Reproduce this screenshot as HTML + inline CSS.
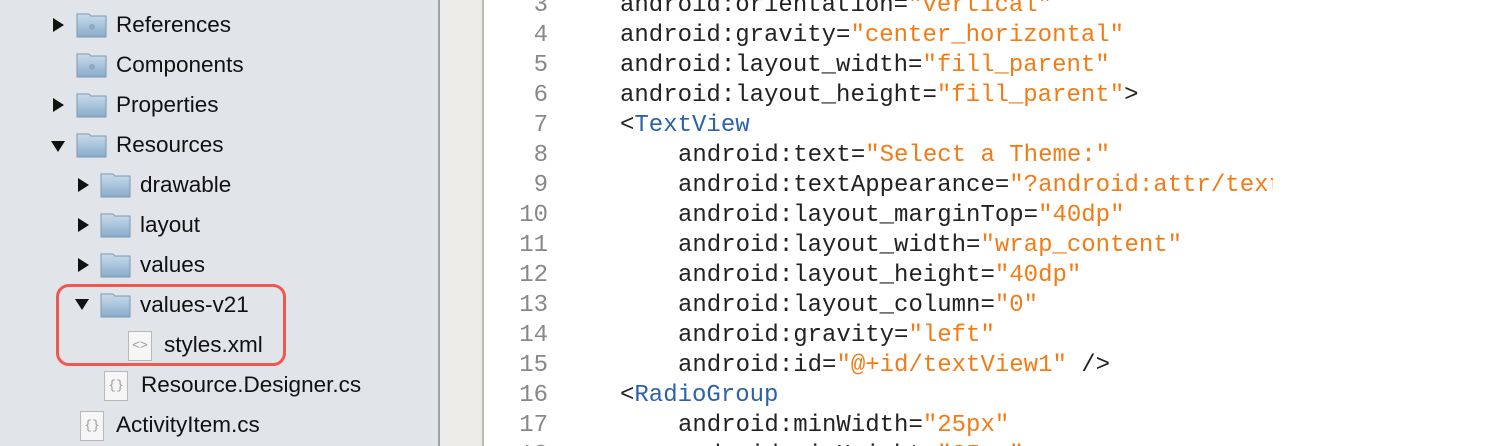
<!DOCTYPE html>
<html><head><meta charset="utf-8"><style>
html,body{margin:0;width:1500px;height:446px;overflow:hidden}
body{background:#fff;position:relative;font-family:"Liberation Sans",sans-serif}
#side{position:absolute;left:0;top:0;width:438px;height:446px;background:#e1e4e9;border-right:2px solid #9ba1a8}
#gut{position:absolute;left:440px;top:0;width:42px;height:446px;background:#ecebe8;border-right:2px solid #b9bab2}
.row{position:absolute;height:40px;line-height:40px;font-size:22.5px;color:#111;white-space:nowrap}
.tri{position:absolute;width:0;height:0}
.tr{border-left:11px solid #111;border-top:7px solid transparent;border-bottom:7px solid transparent}
.td{border-top:11px solid #111;border-left:7px solid transparent;border-right:7px solid transparent}
.fold{position:absolute;width:31px;height:26px}
.file{position:absolute;width:24px;height:30px;background:#f6f6f6;border:1px solid #b8b8b8;box-sizing:border-box;color:#999;font-size:13px;text-align:center;line-height:28px;font-family:"Liberation Mono",monospace}
.code{position:absolute;left:620px;font-family:"Liberation Mono",monospace;font-size:24px;line-height:30px;white-space:pre;color:#222}
.i2{left:678px}
.ln{position:absolute;width:64px;text-align:right;left:484px;font-family:"Liberation Mono",monospace;font-size:24px;line-height:30px;color:#888}
.o{color:#f47b14}.b{color:#2c62a8}
#box{position:absolute;left:56px;top:284px;width:224px;height:76px;border:3px solid #f0584f;border-radius:13px}
</style></head><body>
<div id="side"></div><div id="gut"></div>
<svg width="0" height="0" style="position:absolute"><defs>
<linearGradient id="g" x1="0" y1="0" x2="0" y2="1"><stop offset="0" stop-color="#c9dcec"/><stop offset="1" stop-color="#88aac8"/></linearGradient></defs></svg>
<div style="position:absolute;left:0;top:0">
<div class="tri tr" style="left:53px;top:18px"></div>
<svg class="fold" style="left:76px;top:12px" viewBox="0 0 31 26"><path d="M1 2h12l2 2h15v21H1z" fill="url(#g)" stroke="#7d99b3"/><circle cx="16" cy="15" r="3" fill="#8fa9c2"/></svg>
<div class="row" style="left:116px;top:5px">References</div>

<svg class="fold" style="left:76px;top:52px" viewBox="0 0 31 26"><path d="M1 2h12l2 2h15v21H1z" fill="url(#g)" stroke="#7d99b3"/><circle cx="16" cy="15" r="3" fill="#8fa9c2"/></svg>
<div class="row" style="left:116px;top:45px">Components</div>

<div class="tri tr" style="left:53px;top:98px"></div>
<svg class="fold" style="left:76px;top:92px" viewBox="0 0 31 26"><path d="M1 2h12l2 2h15v21H1z" fill="url(#g)" stroke="#7d99b3"/></svg>
<div class="row" style="left:116px;top:85px">Properties</div>

<div class="tri td" style="left:51px;top:141px"></div>
<svg class="fold" style="left:76px;top:132px" viewBox="0 0 31 26"><path d="M1 2h12l2 2h15v21H1z" fill="url(#g)" stroke="#7d99b3"/></svg>
<div class="row" style="left:116px;top:125px">Resources</div>

<div class="tri tr" style="left:78px;top:178px"></div>
<svg class="fold" style="left:100px;top:172px" viewBox="0 0 31 26"><path d="M1 2h12l2 2h15v21H1z" fill="url(#g)" stroke="#7d99b3"/></svg>
<div class="row" style="left:140px;top:165px">drawable</div>

<div class="tri tr" style="left:78px;top:218px"></div>
<svg class="fold" style="left:100px;top:212px" viewBox="0 0 31 26"><path d="M1 2h12l2 2h15v21H1z" fill="url(#g)" stroke="#7d99b3"/></svg>
<div class="row" style="left:140px;top:205px">layout</div>

<div class="tri tr" style="left:78px;top:258px"></div>
<svg class="fold" style="left:100px;top:252px" viewBox="0 0 31 26"><path d="M1 2h12l2 2h15v21H1z" fill="url(#g)" stroke="#7d99b3"/></svg>
<div class="row" style="left:140px;top:245px">values</div>

<div class="tri td" style="left:75px;top:299px"></div>
<svg class="fold" style="left:100px;top:292px" viewBox="0 0 31 26"><path d="M1 2h12l2 2h15v21H1z" fill="url(#g)" stroke="#7d99b3"/></svg>
<div class="row" style="left:140px;top:285px">values-v21</div>

<div class="file" style="left:128px;top:331px">&lt;&gt;</div>
<div class="row" style="left:164px;top:325px">styles.xml</div>

<div class="file" style="left:104px;top:371px">{}</div>
<div class="row" style="left:141px;top:365px">Resource.Designer.cs</div>

<div class="file" style="left:80px;top:411px">{}</div>
<div class="row" style="left:116px;top:405px">ActivityItem.cs</div>
</div>
<div id="box"></div>

<div class="ln" style="top:-9px">3</div><div class="code" style="top:-9px">android:orientation=<span class="o">"vertical"</span></div>
<div class="ln" style="top:21px">4</div><div class="code" style="top:21px">android:gravity=<span class="o">"center_horizontal"</span></div>
<div class="ln" style="top:51px">5</div><div class="code" style="top:51px">android:layout_width=<span class="o">"fill_parent"</span></div>
<div class="ln" style="top:81px">6</div><div class="code" style="top:81px">android:layout_height=<span class="o">"fill_parent"</span>&gt;</div>
<div class="ln" style="top:111px">7</div><div class="code" style="top:111px">&lt;<span class="b">TextView</span></div>
<div class="ln" style="top:141px">8</div><div class="code i2" style="top:141px">android:text=<span class="o">"Select a Theme:"</span></div>
<div class="ln" style="top:171px">9</div><div class="code i2" style="top:171px;width:595px;overflow:hidden">android:textAppearance=<span class="o">"?android:attr/textAppearanceMedium"</span></div>
<div class="ln" style="top:201px">10</div><div class="code i2" style="top:201px">android:layout_marginTop=<span class="o">"40dp"</span></div>
<div class="ln" style="top:231px">11</div><div class="code i2" style="top:231px">android:layout_width=<span class="o">"wrap_content"</span></div>
<div class="ln" style="top:261px">12</div><div class="code i2" style="top:261px">android:layout_height=<span class="o">"40dp"</span></div>
<div class="ln" style="top:291px">13</div><div class="code i2" style="top:291px">android:layout_column=<span class="o">"0"</span></div>
<div class="ln" style="top:321px">14</div><div class="code i2" style="top:321px">android:gravity=<span class="o">"left"</span></div>
<div class="ln" style="top:351px">15</div><div class="code i2" style="top:351px">android:id=<span class="o">"@+id/textView1"</span> /&gt;</div>
<div class="ln" style="top:381px">16</div><div class="code" style="top:381px">&lt;<span class="b">RadioGroup</span></div>
<div class="ln" style="top:411px">17</div><div class="code i2" style="top:411px">android:minWidth=<span class="o">"25px"</span></div>
<div class="ln" style="top:441px">18</div><div class="code i2" style="top:441px">android:minHeight=<span class="o">"25px"</span></div>
</body></html>
